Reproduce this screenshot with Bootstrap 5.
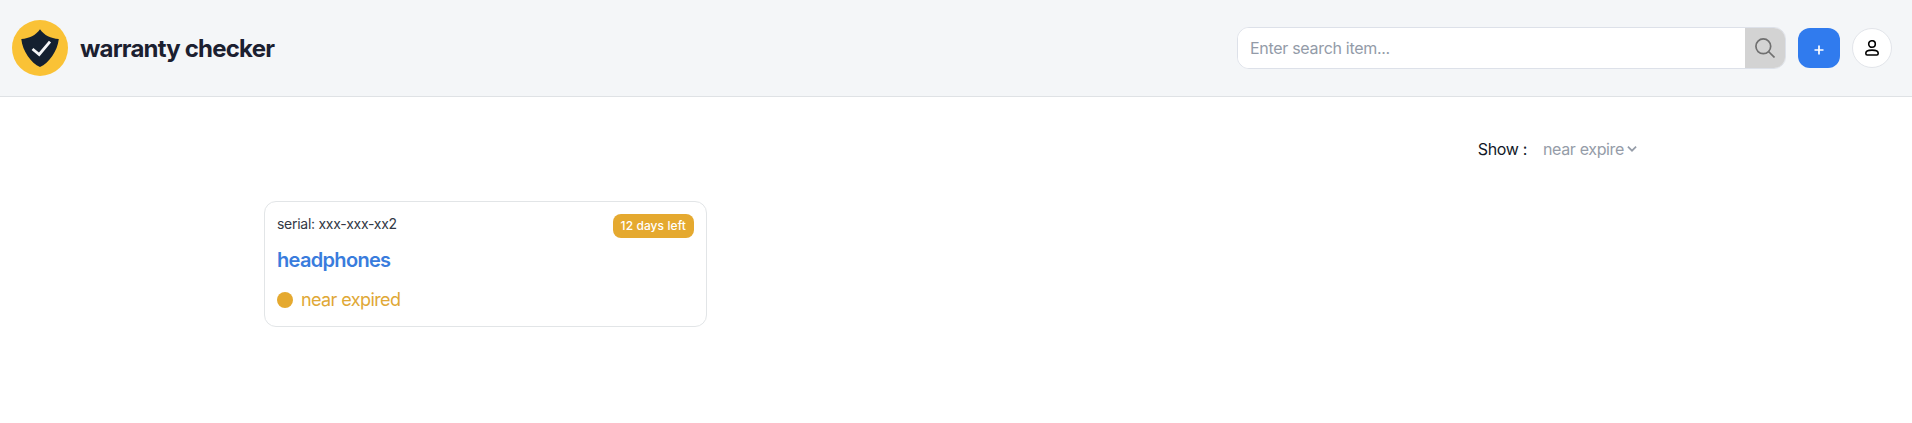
<!DOCTYPE html>
<html lang="en">
<head>
<meta charset="utf-8">
<meta name="viewport" content="width=device-width, initial-scale=1">
<title>warranty checker</title>
<link href="https://cdn.jsdelivr.net/npm/bootstrap@5.3.0/dist/css/bootstrap.min.css" rel="stylesheet">
<style>
body{font-family:Inter,"Liberation Sans",sans-serif;font-size:16px;background:#fff;color:#111827}
.topbar{height:97px;background:#f4f6f8;border-bottom:1px solid #dfe2e5;padding:0 20px 0 12px}
.brand-title{font-size:24px;line-height:32px;font-weight:700;letter-spacing:-.8px;color:#1b2030;padding-top:2px}
.tools{gap:12px}
.search-box{width:549px;height:42px;border:1px solid #dde1e9;border-radius:12px;overflow:hidden;background:#fff}
.search-box .form-control{font-size:16px;letter-spacing:-.3px;padding:0 12px;color:#111827}
.search-box .form-control::placeholder{color:#939ba8}
.search-btn{width:40px;background:#d3d3d3;color:#707070;border-radius:0}
.add-btn,.add-btn:hover{width:42px;height:40px;border-radius:12px;background:#307bee;color:#fff}
.user-btn{width:40px;height:40px;background:#fff;border:1px solid #e2e5ea;color:#000}
.page{width:1384px}
.filter{padding:40px 11px 0 0;height:104px;line-height:24px;letter-spacing:-.35px}
.filter-menu{color:#959ca8;gap:3px}
.item-card{width:443px;height:126px;border:1px solid #e2e5e7;border-radius:12px;padding:12px}
.serial{font-size:14px;line-height:20px;color:#323845;letter-spacing:-.27px}
.days{height:24px;border-radius:8px;background:#e5a92f;font-size:12px;font-weight:500;padding:0 8px;letter-spacing:.08px}
.item-name{font-size:20px;line-height:28px;font-weight:600;color:#397cdd;letter-spacing:-.68px;margin-top:8px}
.status{font-size:18px;line-height:28px;color:#e0a836;letter-spacing:-.6px;gap:8px;margin-top:12px}
.dot{width:16px;height:16px;background:#e5a92f}
</style>
</head>
<body>
<header class="topbar d-flex align-items-center justify-content-between">
  <a class="d-flex align-items-center gap-2 text-decoration-none" href="#">
    <svg width="56" height="56" viewBox="0 0 56 56" aria-hidden="true" class="me-1">
      <circle cx="28" cy="28" r="28" fill="#fac236"/>
      <path d="M28 9.300C23.500 15.500 17.500 18.500 9.300 19C10.500 31 19 43 28 47C37 43 45.500 31 46.800 19C38.500 18.500 32.500 15.500 28 9.300Z" fill="#142030"/>
      <path d="M20.500 29l6.700 5.500L38 21.700" fill="none" stroke="#f4f6f8" stroke-width="2.800"/>
    </svg>
    <span class="brand-title">warranty checker</span>
  </a>
  <div class="tools d-flex align-items-center">
    <form class="search-box d-flex">
      <input class="form-control border-0 shadow-none rounded-0" type="text" placeholder="Enter search item..." aria-label="Search">
      <button class="search-btn btn border-0 p-0 flex-shrink-0 d-flex align-items-center justify-content-center" type="button" aria-label="Search">
        <svg width="20" height="20" viewBox="0 0 20 20" fill="none" stroke="currentColor" stroke-width="1.700"><circle cx="8.300" cy="8.300" r="7.400"/><path d="M13.500 13.500l6 6"/></svg>
      </button>
    </form>
    <button class="add-btn btn border-0 p-0 d-flex align-items-center justify-content-center" type="button" aria-label="Add">
      <svg width="10" height="10" viewBox="0 0 10 10" stroke="currentColor" stroke-width="1.700" class="mt-1"><path d="M5 .5v9M.5 5h9"/></svg>
    </button>
    <button class="user-btn btn rounded-circle p-0 d-flex align-items-center justify-content-center" type="button" aria-label="Account">
      <svg width="14" height="16" viewBox="0 0 14 16" fill="none" stroke="currentColor" stroke-width="1.600"><circle cx="7" cy="4" r="3.300"/><path d="M.8 13.300C.8 11 3 10.100 7 10.100s6.200.900 6.200 3.200c0 1-.6 1.700-1.400 1.700H2.200C1.400 15 .8 14.300.8 13.300Z"/></svg>
    </button>
  </div>
</header>
<main class="page mx-auto">
  <div class="filter d-flex justify-content-end align-items-start">
    <span class="me-3">Show :</span>
    <span class="filter-menu d-flex align-items-center">near expire
      <svg width="10" height="6" viewBox="0 0 10 6" fill="none" stroke="currentColor" stroke-width="1.700"><path d="M.9.700l4.100 4L9.100.700"/></svg>
    </span>
  </div>
  <article class="item-card">
    <div class="d-flex justify-content-between align-items-start">
      <span class="serial">serial: xxx-xxx-xx2</span>
      <span class="days badge d-flex align-items-center">12 days left</span>
    </div>
    <h2 class="item-name mb-0">headphones</h2>
    <div class="status d-flex align-items-center"><span class="dot rounded-circle"></span>near expired</div>
  </article>
</main>
<script src="https://cdn.jsdelivr.net/npm/bootstrap@5.3.0/dist/js/bootstrap.bundle.min.js"></script>
</body>
</html>
